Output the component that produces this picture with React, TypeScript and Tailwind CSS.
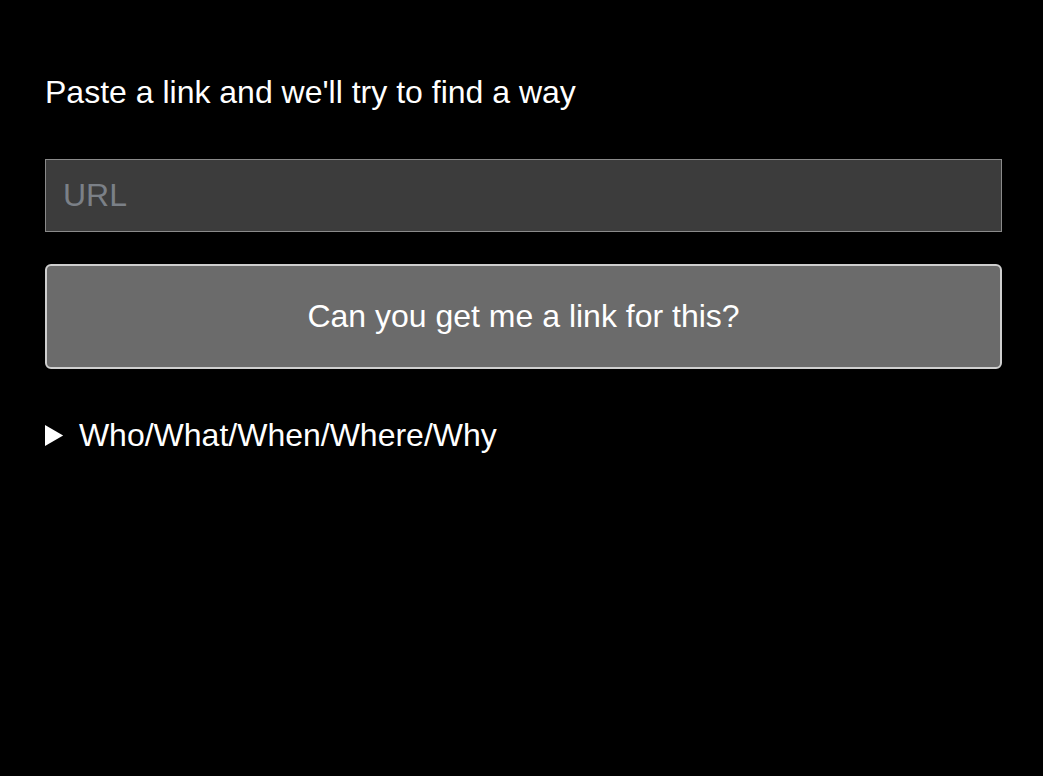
export default function App() {
  return (
    <div className="min-h-screen bg-black pl-[45px] pr-[41px] pt-[75px] text-white" style={{ fontFamily: '"Liberation Sans", Arial, sans-serif' }}>
      <p className="text-[32px] leading-[34px]">Paste a link and we'll try to find a way</p>

      <form className="mt-[50px] flex flex-col gap-[32px]" onSubmit={(e) => e.preventDefault()}>
        <input
          type="text"
          placeholder="URL"
          className="h-[73px] w-full border border-[#8a8a8a] bg-[#3c3c3c] px-[17px] text-[32px] text-white outline-none placeholder:text-[#7b8087]"
        />
        <button
          type="submit"
          className="h-[105px] w-full rounded-[6px] border-2 border-[#cfcfcf] bg-[#6b6b6b] pb-[2px] text-[32px] text-white"
        >
          Can you get me a link for this?
        </button>
      </form>

      <details className="mt-[42px] text-[32px]">
        <summary className="cursor-pointer">Who/What/When/Where/Why</summary>
        <p className="mt-4 text-[24px]">Nothing here yet.</p>
      </details>
    </div>
  )
}
